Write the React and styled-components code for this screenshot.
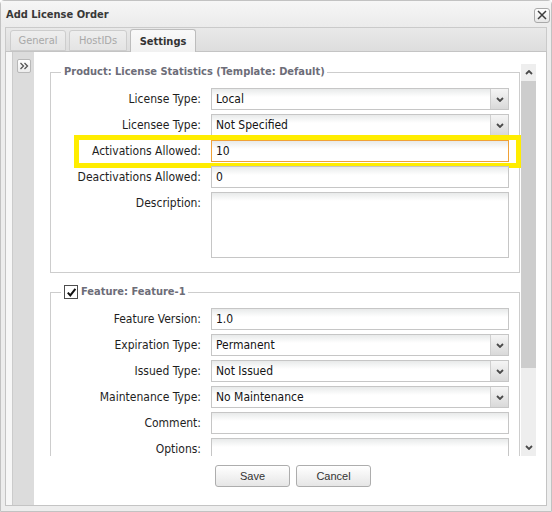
import React from "react";
import styled, { createGlobalStyle } from "styled-components";

const GlobalStyle = createGlobalStyle`
  html, body {
    margin: 0;
    padding: 0;
    background: #ffffff;
  }
  body {
    font-family: "DejaVu Sans Condensed", "DejaVu Sans", sans-serif;
    font-size: 12px;
    color: #222;
  }
  * {
    box-sizing: border-box;
  }
`;

const productRows = [
    { label: "License Type:", value: "Local", kind: "select" },
    { label: "Licensee Type:", value: "Not Specified", kind: "select" },
    { label: "Activations Allowed:", value: "10", kind: "input", focused: true, highlight: true },
    { label: "Deactivations Allowed:", value: "0", kind: "input" },
    { label: "Description:", value: "", kind: "textarea" },
];

const featureRows = [
    { label: "Feature Version:", value: "1.0", kind: "input" },
    { label: "Expiration Type:", value: "Permanent", kind: "select" },
    { label: "Issued Type:", value: "Not Issued", kind: "select" },
    { label: "Maintenance Type:", value: "No Maintenance", kind: "select" },
    { label: "Comment:", value: "", kind: "input" },
    { label: "Options:", value: "", kind: "input" },
];

const Chevron = ({ up }) => (
    <svg width="8" height="5" viewBox="0 0 8 5">
        <path
            d={up ? "M1 4 L4 1 L7 4" : "M1 1 L4 4 L7 1"}
            fill="none"
            stroke="#4a4a4a"
            strokeWidth="1.8"
        />
    </svg>
);

const FieldControl = ({ row }) => {
    if (row.kind === "select") {
        return (
            <SelectBox>
                <ValueText>{row.value}</ValueText>
                <Trigger>
                    <Chevron />
                </Trigger>
            </SelectBox>
        );
    }
    if (row.kind === "textarea") {
        return <TextArea />;
    }
    return (
        <InputBox $focused={row.focused}>
            <ValueText>{row.value}</ValueText>
        </InputBox>
    );
};

const FormRows = ({ rows }) => (
    <Rows>
        {rows.map((row) => (
            <Row key={row.label}>
                <Label>{row.label}</Label>
                <FieldControl row={row} />
                {row.highlight && <Highlight />}
            </Row>
        ))}
    </Rows>
);

const App = () => {
    return (
        <>
            <GlobalStyle />
            <Dialog>
                <TitleBar>
                    <Title>Add License Order</Title>
                    <CloseButton>
                        <svg width="10" height="10" viewBox="0 0 10 10">
                            <path d="M1 1 L9 9 M9 1 L1 9" stroke="#3c3c3c" strokeWidth="1.5" />
                        </svg>
                    </CloseButton>
                </TitleBar>
                <Body>
                    <TabStrip>
                        <Tab $width={56}>General</Tab>
                        <Tab $width={58}>HostIDs</Tab>
                        <Tab $width={66} $active>
                            Settings
                        </Tab>
                    </TabStrip>
                    <Panel>
                        <Sidebar>
                            <ExpandButton>
                                <svg width="10" height="8" viewBox="0 0 10 8">
                                    <path
                                        d="M1.5 1 L4.5 4 L1.5 7 M5.5 1 L8.5 4 L5.5 7"
                                        fill="none"
                                        stroke="#555"
                                        strokeWidth="1.3"
                                    />
                                </svg>
                            </ExpandButton>
                        </Sidebar>
                        <Main>
                            <ScrollArea>
                                <Viewport>
                                    <Section>
                                        <Legend>Product: License Statistics (Template: Default)</Legend>
                                        <FormRows rows={productRows} />
                                    </Section>
                                    <Section $spaced>
                                        <Legend>
                                            <CheckBox>
                                                <svg width="11" height="11" viewBox="0 0 11 11">
                                                    <path
                                                        d="M1.8 5.6 L4.3 8.4 L9.4 1.8"
                                                        fill="none"
                                                        stroke="#111"
                                                        strokeWidth="2"
                                                    />
                                                </svg>
                                            </CheckBox>
                                            Feature: Feature-1
                                        </Legend>
                                        <FormRows rows={featureRows} />
                                    </Section>
                                </Viewport>
                                <Scrollbar>
                                    <ScrollButton>
                                        <Chevron up />
                                    </ScrollButton>
                                    <Thumb />
                                    <Track />
                                    <ScrollButton>
                                        <Chevron />
                                    </ScrollButton>
                                </Scrollbar>
                            </ScrollArea>
                            <ButtonBar>
                                <Button>Save</Button>
                                <Button>Cancel</Button>
                            </ButtonBar>
                        </Main>
                    </Panel>
                </Body>
            </Dialog>
        </>
    );
};

const Dialog = styled.div`
    width: 552px;
    height: 512px;
    display: flex;
    flex-direction: column;
    border: 1px solid #c2c2c2;
    border-radius: 4px 4px 0 0;
    background: #ededed;
`;

const TitleBar = styled.div`
    height: 26px;
    display: flex;
    align-items: center;
    justify-content: space-between;
    padding: 0 1px 0 5px;
    background: linear-gradient(#f6f6f6, #ebebeb);
`;

const Title = styled.div`
    font-size: 11px;
    font-weight: bold;
    color: #383838;
    margin-top: 1px;
`;

const CloseButton = styled.div`
    width: 16px;
    height: 15px;
    display: flex;
    align-items: center;
    justify-content: center;
    border: 1px solid #a9a9a9;
    border-radius: 3px;
    background: linear-gradient(#ffffff, #e6e6e6);
    margin-top: 2px;
`;

const Body = styled.div`
    flex: 1;
    display: flex;
    flex-direction: column;
    padding: 0 4px 5px 4px;
`;

const TabStrip = styled.div`
    height: 24px;
    display: flex;
    align-items: flex-end;
    gap: 3px;
    padding-left: 4px;
    border: 1px solid #cacaca;
    border-bottom: none;
    background: linear-gradient(#e9e9e9, #dddddd);
`;

const Tab = styled.div`
    width: ${(p) => p.$width}px;
    height: ${(p) => (p.$active ? 23 : 21)}px;
    margin-bottom: ${(p) => (p.$active ? -1 : 0)}px;
    display: flex;
    align-items: center;
    justify-content: center;
    font-size: 11px;
    font-weight: ${(p) => (p.$active ? "bold" : "normal")};
    color: ${(p) => (p.$active ? "#333" : "#a8a8a8")};
    border: 1px solid ${(p) => (p.$active ? "#bdbdbd" : "#cdcdcd")};
    border-bottom: ${(p) => (p.$active ? "none" : "1px solid #cdcdcd")};
    border-radius: 3px 3px 0 0;
    background: ${(p) =>
        p.$active ? "linear-gradient(#f9f9f9, #f1f1f1)" : "linear-gradient(#eeeeee, #e4e4e4)"};
    position: relative;
    z-index: 1;
`;

const Panel = styled.div`
    flex: 1;
    display: flex;
    border: 1px solid #c4c4c4;
    padding-left: 6px;
    background: #f7f7f7;
    min-height: 0;
`;

const Sidebar = styled.div`
    width: 22px;
    border-left: 1px solid #cbcbcb;
    background: #dcdcdc;
    padding: 7px 0 0 4px;
`;

const ExpandButton = styled.div`
    width: 14px;
    height: 14px;
    display: flex;
    align-items: center;
    justify-content: center;
    border: 1px solid #b8b8b8;
    border-radius: 2px;
    background: linear-gradient(#ffffff, #ececec);
`;

const Main = styled.div`
    flex: 1;
    display: flex;
    flex-direction: column;
    background: #ffffff;
    min-width: 0;
`;

const ScrollArea = styled.div`
    height: 392px;
    margin: 12px 10px 0 0;
    display: flex;
`;

const Viewport = styled.div`
    flex: 1;
    overflow: hidden;
    padding: 1px 1px 0 16px;
`;

const Section = styled.fieldset`
    margin: ${(p) => (p.$spaced ? "12px" : "0")} 0 0 0;
    padding: 9px 10px 14px 10px;
    border: 1px solid #cdcdcd;
    min-width: 0;
`;

const Legend = styled.legend`
    padding: 0 2px 0 3px;
    display: flex;
    align-items: center;
    gap: 3px;
    font-size: 11px;
    line-height: 14px;
    font-weight: bold;
    color: #6d6d78;
`;

const CheckBox = styled.span`
    width: 14px;
    height: 14px;
    display: flex;
    align-items: center;
    justify-content: center;
    border: 1px solid #4d4d4d;
    background: #ffffff;
`;

const Rows = styled.div`
    display: flex;
    flex-direction: column;
    gap: 4px;
`;

const Row = styled.div`
    position: relative;
    display: flex;
    gap: 10px;
`;

const Label = styled.div`
    width: 140px;
    flex-shrink: 0;
    text-align: right;
    line-height: 22px;
    color: #1e1e1e;
    white-space: nowrap;
`;

const fieldBackground = "linear-gradient(#e8eaea 0px, #ffffff 8px)";

const InputBox = styled.div`
    flex: 1;
    height: 22px;
    display: flex;
    align-items: center;
    padding-left: 4px;
    border: 1px solid ${(p) => (p.$focused ? "#f0a136" : "#c6c6c6")};
    background: ${fieldBackground};
`;

const SelectBox = styled.div`
    flex: 1;
    height: 22px;
    display: flex;
    align-items: stretch;
    border: 1px solid #c6c6c6;
    background: ${fieldBackground};
`;

const ValueText = styled.span`
    flex: 1;
    display: flex;
    align-items: center;
    color: #141414;
    font-size: 12px;
    ${SelectBox} & {
        padding-left: 4px;
    }
`;

const Trigger = styled.div`
    width: 18px;
    display: flex;
    align-items: center;
    justify-content: center;
    border-left: 1px solid #cfcfcf;
    background: linear-gradient(#f5f5f5, #d9d9d9);
`;

const TextArea = styled.div`
    flex: 1;
    height: 66px;
    border: 1px solid #c6c6c6;
    background: ${fieldBackground};
`;

const Highlight = styled.div`
    position: absolute;
    left: 13px;
    right: -12px;
    top: -5px;
    bottom: -6px;
    border: 5px solid #ffed00;
    pointer-events: none;
`;

const Scrollbar = styled.div`
    width: 15px;
    display: flex;
    flex-direction: column;
    background: #eeeeee;
`;

const ScrollButton = styled.div`
    height: 17px;
    display: flex;
    align-items: center;
    justify-content: center;
`;

const Thumb = styled.div`
    height: 287px;
    background: #cdcdcd;
`;

const Track = styled.div`
    flex: 1;
`;

const ButtonBar = styled.div`
    display: flex;
    justify-content: center;
    gap: 6px;
    padding: 9px 0 0 6px;
`;

const Button = styled.div`
    width: 75px;
    height: 22px;
    display: flex;
    align-items: center;
    justify-content: center;
    border: 1px solid #adadad;
    border-radius: 3px;
    background: linear-gradient(#ffffff, #e6e6e6);
    font-family: "Liberation Sans", Arial, sans-serif;
    font-size: 11px;
    color: #333;
`;

export default App;
